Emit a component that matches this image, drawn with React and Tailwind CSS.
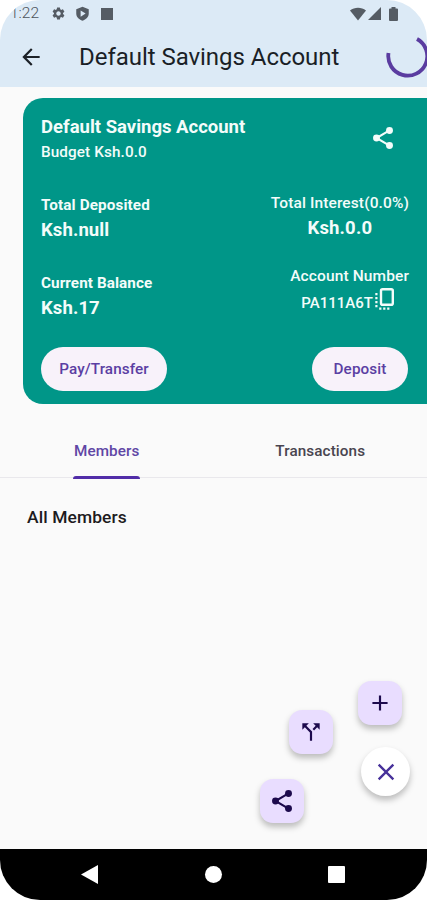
import React from "react";
import { MdAdd, MdArrowBack, MdCallSplit, MdClose, MdSettings } from "react-icons/md";

function StatusBar() {
  return (
    <div className="flex h-[27px] items-center pl-[10px] pr-[29px] text-[#555c64]">
      <span className="w-[41px] text-[15.5px] leading-[29px] font-light text-[#4e555c]">1:22</span>
      <MdSettings className="size-[15px] shrink-0" />
      <svg className="ml-[9px] size-[15px]" viewBox="0 0 24 24" fill="currentColor">
        <path fillRule="evenodd" d="M12 1 2 5v7c0 5.500 4.300 9.700 10 11.500 5.700-1.800 10-6 10-11.500V5zM9 7l8 5-8 5z" />
      </svg>
      <div className="ml-[11px] size-[12px] bg-[#555c64]" />
      <svg className="ml-auto h-[14px] w-[16px]" viewBox="0 0 16 14" fill="currentColor">
        <path d="M0 3.500C4.500-.3 11.500-.3 16 3.500L8 13.500z" />
      </svg>
      <svg className="ml-[2px] size-[13px]" viewBox="0 0 13 13" fill="currentColor">
        <path d="M0 13 13 0v13z" />
      </svg>
      <svg className="ml-[8px] h-[14px] w-[9px]" viewBox="0 0 9 14" fill="currentColor">
        <path d="M2.500 0h4v1.500H8a1 1 0 0 1 1 1V13a1 1 0 0 1-1 1H1a1 1 0 0 1-1-1V2.500a1 1 0 0 1 1-1h1.500z" />
      </svg>
    </div>
  );
}

function ShareIcon({ className }) {
  return (
    <svg className={className} viewBox="0 0 24 24" fill="currentColor">
      <path d="M18 5 6 12l12 7" fill="none" stroke="currentColor" strokeWidth="1.900" />
      <circle cx="18" cy="5" r="3.200" />
      <circle cx="6" cy="12" r="3.200" />
      <circle cx="18" cy="19" r="3.200" />
    </svg>
  );
}

function CopyIcon({ className }) {
  return (
    <svg className={className} viewBox="0 0 21 24" fill="none" stroke="currentColor">
      <rect x="7" y="2.200" width="11.800" height="15.600" rx="1.600" strokeWidth="2.400" />
      <path d="M2.400 6v15.800" strokeWidth="2.200" strokeDasharray="2.200 1.800" />
      <path d="M5.200 21.700H16" strokeWidth="2.200" strokeDasharray="2.200 1.800" />
    </svg>
  );
}

function AppBar() {
  return (
    <header className="h-[87px] bg-[#dceaf6]">
      <StatusBar />
      <div className="flex h-[60px] items-center pl-[18px]">
        <MdArrowBack className="size-[26px] shrink-0 text-[#1d2228]" />
        <h1 className="ml-[35px] w-[307px] shrink-0 text-[24px] leading-[60px] tracking-[-0.04px] whitespace-nowrap text-[#1a1f26]">
          Default Savings Account
        </h1>
        <svg className="size-[44px] shrink-0" viewBox="0 0 44 44" fill="none">
          <path d="M2.500 18A19.500 19.500 0 1 0 31 4" stroke="#5a3ca0" strokeWidth="3.800" />
        </svg>
      </div>
    </header>
  );
}

function AccountCard() {
  return (
    <section className="mt-[11px] ml-[23px] h-[306px] rounded-l-[20px] bg-[#009688] pt-[16px] pr-[18px] pl-[18px] text-[#f3fcfa]">
      <div className="flex h-[76px] justify-between">
        <div>
          <h2 className="text-[18.5px] leading-[26px] font-bold whitespace-nowrap">
            Default Savings Account
          </h2>
          <p className="text-[15.25px] leading-[24px] font-medium tracking-[0.12px]">Budget Ksh.0.0</p>
        </div>
        <ShareIcon className="mt-[11px] mr-[13px] size-[26px]" />
      </div>
      <div className="flex h-[78px] justify-between">
        <div className="pt-[3px]">
          <p className="text-[15.25px] leading-[24px] font-bold tracking-[0.12px]">Total Deposited</p>
          <p className="text-[18.5px] leading-[26px] font-bold tracking-[0.1px]">Ksh.null</p>
        </div>
        <div className="flex flex-col items-center">
          <p className="text-[15.5px] leading-[27px] font-medium tracking-[0.12px] whitespace-nowrap">
            Total Interest(0.0%)
          </p>
          <p className="text-[18.5px] leading-[22px] font-bold tracking-[0.15px]">Ksh.0.0</p>
        </div>
      </div>
      <div className="flex h-[79px] justify-between">
        <div className="pt-[3px]">
          <p className="text-[15.25px] leading-[24px] font-bold tracking-[0.08px]">Current Balance</p>
          <p className="text-[18.5px] leading-[26px] font-bold tracking-[0.1px]">Ksh.17</p>
        </div>
        <div className="-mt-[5px] flex flex-col items-center">
          <p className="text-[15.5px] leading-[26px] font-medium tracking-[0.12px] whitespace-nowrap">
            Account Number
          </p>
          <div className="flex h-[28px] items-start pr-[3px]">
            <span className="text-[15px] leading-[29px] font-medium">PA111A6T</span>
            <CopyIcon className="-mt-[2px] ml-px h-[24px] w-[21px]" />
          </div>
        </div>
      </div>
      <div className="flex justify-between">
        <button className="h-[44px] w-[126px] rounded-full bg-[#f8f2fa] text-[15.25px] font-medium tracking-[0.1px] text-[#5b3fa3]">
          Pay/Transfer
        </button>
        <button className="mr-px h-[44px] w-[96px] rounded-full bg-[#f8f2fa] text-[15.25px] font-medium tracking-[0.1px] text-[#5b3fa3]">
          Deposit
        </button>
      </div>
    </section>
  );
}

function Tabs() {
  return (
    <nav className="mt-[21px] flex h-[53px] border-b border-[#e9e8ec] text-[15.25px] font-medium tracking-[0.1px]">
      <div className="flex flex-1 justify-center">
        <div className="flex h-[54px] w-[67px] flex-col items-center justify-between text-[#6046a5]">
          <span className="leading-[53px]">Members</span>
          <div className="-mt-[3px] h-[3px] w-full shrink-0 rounded-t-[3px] bg-[#512da8]" />
        </div>
      </div>
      <div className="flex-1 text-center leading-[53px] text-[#49454f]">Transactions</div>
    </nav>
  );
}

function SpeedDial() {
  const tile =
    "flex size-[44px] items-center justify-center rounded-[13px] bg-[#e9ddff] text-[#1d0a4d] shadow-[0_4px_6px_rgba(0,0,0,0.25)]";
  return (
    <div className="relative mt-auto h-[168px]">
      <button className={`absolute top-0 left-[358px] ${tile}`}>
        <MdAdd className="size-[26px]" />
      </button>
      <button className={`absolute top-[29px] left-[289px] ${tile}`}>
        <MdCallSplit className="size-[26px]" />
      </button>
      <button className="absolute top-[66px] left-[361px] flex size-[49px] items-center justify-center rounded-full bg-white text-[#47319a] shadow-[0_4px_6px_rgba(0,0,0,0.25)]">
        <MdClose className="size-[28px]" />
      </button>
      <button className={`absolute top-[98px] left-[260px] ${tile}`}>
        <ShareIcon className="size-[26px]" />
      </button>
    </div>
  );
}

function NavigationBar() {
  return (
    <footer className="flex h-[51px] shrink-0 items-center bg-black pl-[81px]">
      <svg className="h-[19px] w-[17px]" viewBox="0 0 17 19">
        <path d="M0 9.500 17 0v19z" fill="white" />
      </svg>
      <div className="ml-[107px] size-[17px] rounded-full bg-white" />
      <div className="ml-[106px] size-[17px] rounded-[1px] bg-white" />
    </footer>
  );
}

export default function App() {
  return (
    <div className="h-[900px] w-[427px] overflow-hidden bg-white font-[Roboto,sans-serif]">
      <div className="flex h-full flex-col overflow-hidden rounded-[40px] bg-[#fafafa]">
        <AppBar />
        <AccountCard />
        <Tabs />
        <h3 className="mt-[25px] ml-[27px] text-[17.4px] leading-[28px] font-medium tracking-[0.12px] text-[#1d1b20]">
          All Members
        </h3>
        <SpeedDial />
        <NavigationBar />
      </div>
    </div>
  );
}
